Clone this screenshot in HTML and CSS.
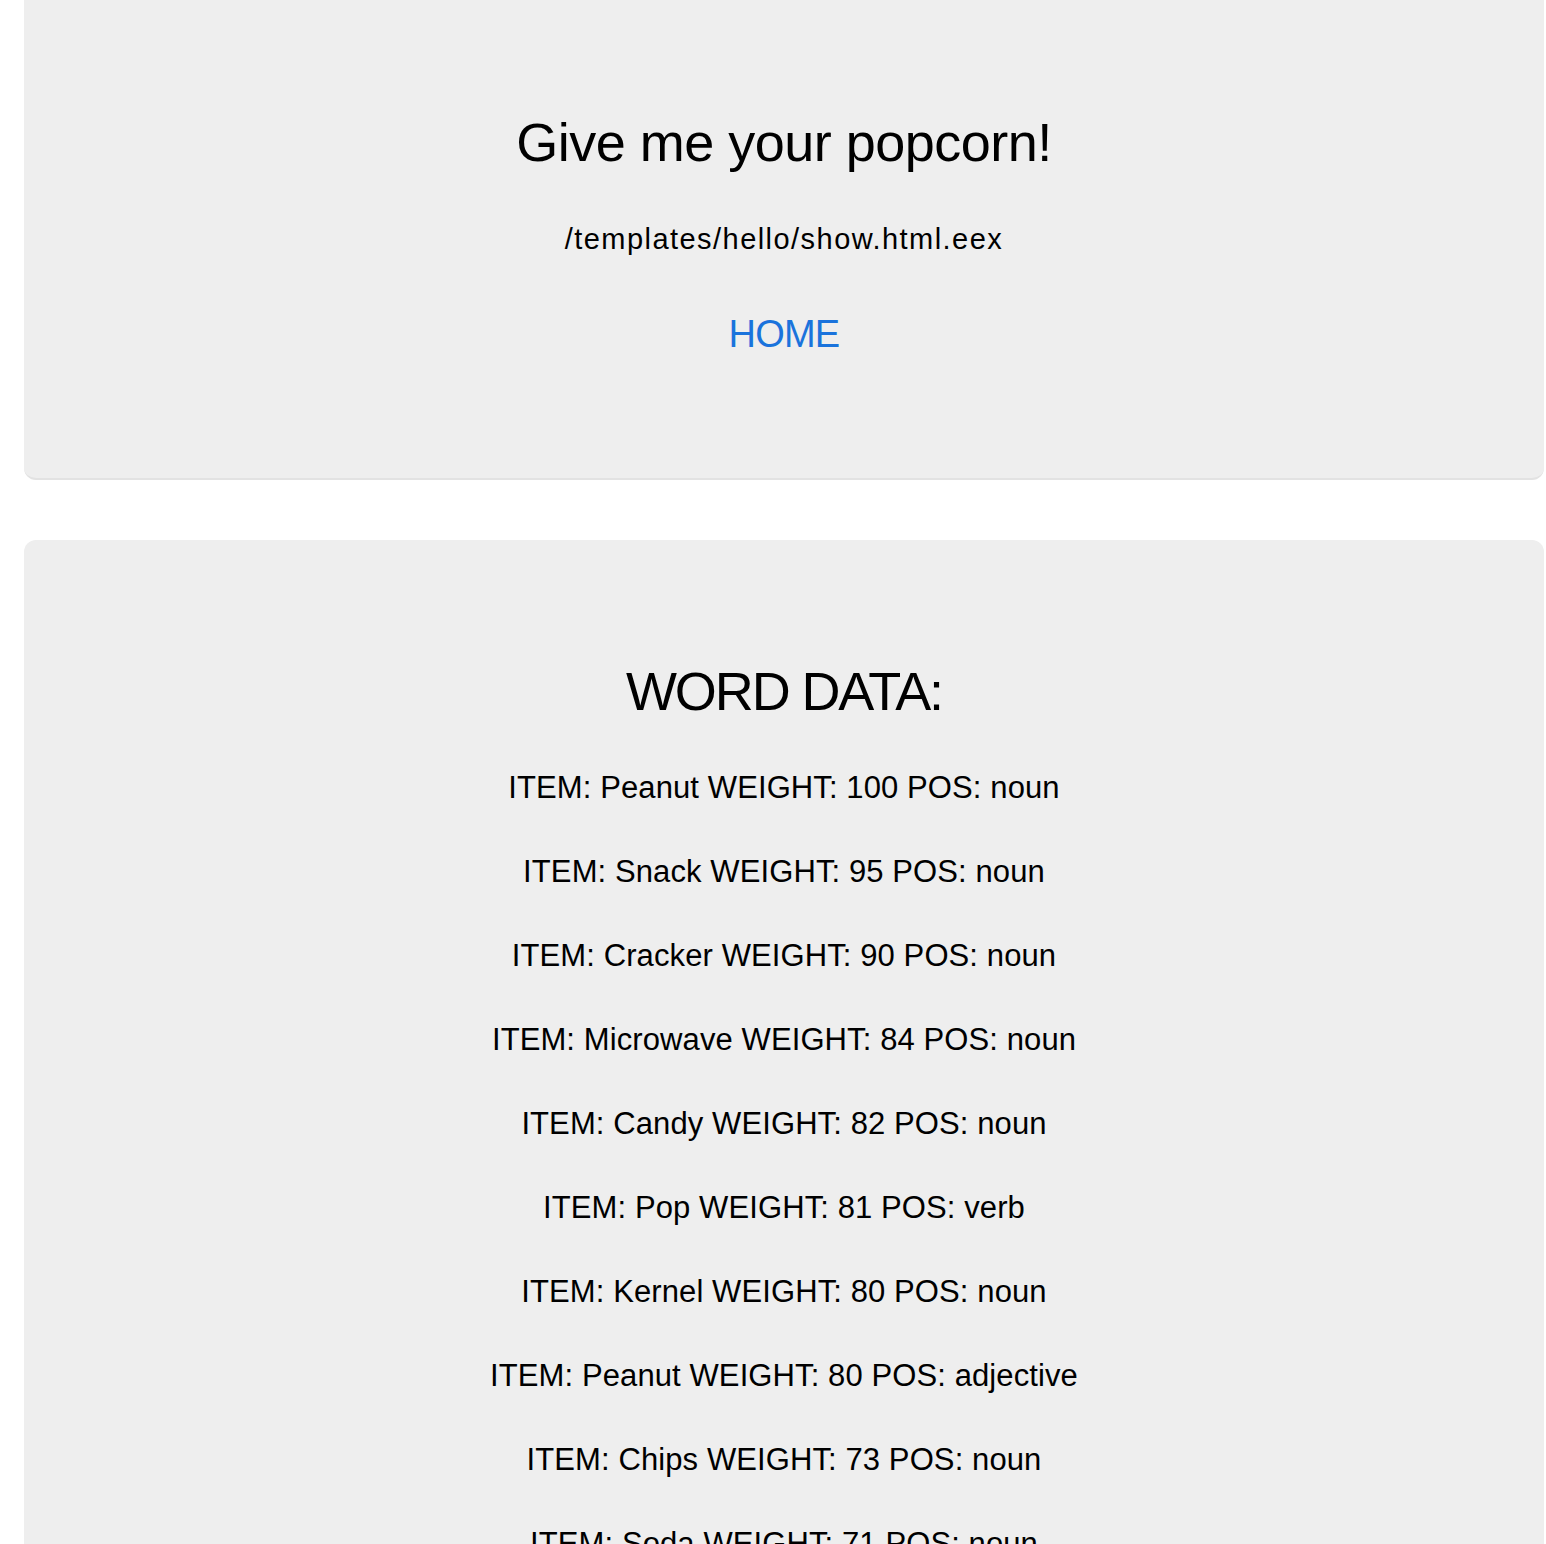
FILE: index.html
```html
<!DOCTYPE html>
<html lang="en">
<head>
<meta charset="utf-8">
<title>Give me your popcorn!</title>
<link rel="stylesheet" href="styles.css">
</head>
<body>
<div class="container">
  <section class="jumbotron jumbotron-top">
    <h2 class="title">Give me your popcorn!</h2>
    <p class="path">/templates/hello/show.html.eex</p>
    <a class="home" href="#">HOME</a>
  </section>
  <section class="jumbotron jumbotron-data">
    <h2 class="data-title">WORD DATA:</h2>
    <p class="item">ITEM: Peanut WEIGHT: 100 POS: noun</p>
    <p class="item">ITEM: Snack WEIGHT: 95 POS: noun</p>
    <p class="item">ITEM: Cracker WEIGHT: 90 POS: noun</p>
    <p class="item">ITEM: Microwave WEIGHT: 84 POS: noun</p>
    <p class="item">ITEM: Candy WEIGHT: 82 POS: noun</p>
    <p class="item">ITEM: Pop WEIGHT: 81 POS: verb</p>
    <p class="item">ITEM: Kernel WEIGHT: 80 POS: noun</p>
    <p class="item">ITEM: Peanut WEIGHT: 80 POS: adjective</p>
    <p class="item">ITEM: Chips WEIGHT: 73 POS: noun</p>
    <p class="item">ITEM: Soda WEIGHT: 71 POS: noun</p>
  </section>
</div>
</body>
</html>
```

FILE: styles.css
```css
html, body {
  margin: 0;
  padding: 0;
  background: #ffffff;
}

body {
  font-family: "Liberation Sans", Arial, Helvetica, sans-serif;
  color: #000000;
}

.container {
  padding: 0 2px 0 24px;
}

.jumbotron {
  background: #eeeeee;
  border-radius: 12px;
  border-bottom: 2px solid #e2e2e2;
  text-align: center;
  display: flex;
  flex-direction: column;
  align-items: center;
}

.jumbotron-top {
  margin-top: -12px;
  padding: 124px 0 122px;
}

.jumbotron-data {
  margin-top: 60px;
  padding: 121px 0 80px;
}

.title {
  margin: 0;
  font-size: 54px;
  line-height: 60px;
  font-weight: normal;
  letter-spacing: -0.5px;
}

.path {
  margin: 47px 0 0;
  font-size: 29px;
  line-height: 40px;
  letter-spacing: 1.45px;
}

.home {
  margin-top: 53px;
  font-size: 38px;
  line-height: 44px;
  letter-spacing: -0.8px;
  color: #1a73dc;
  text-decoration: none;
}

.data-title {
  margin: 0 0 3px;
  font-size: 54px;
  line-height: 60px;
  font-weight: normal;
  letter-spacing: -2.1px;
}

.item {
  margin: 44px 0 0;
  font-size: 31px;
  line-height: 40px;
  letter-spacing: 0.1px;
}
```
